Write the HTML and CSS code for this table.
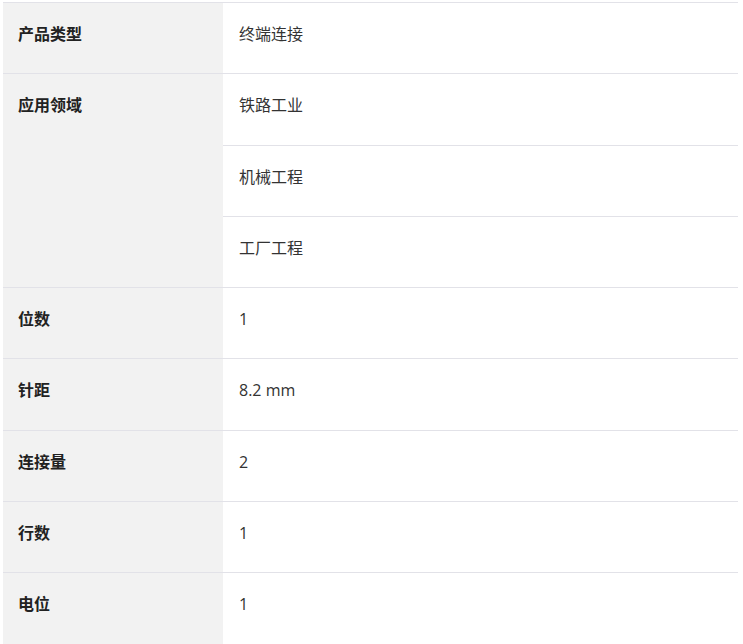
FILE: index.html
```html
<!DOCTYPE html>
<html lang="zh">
<head>
<meta charset="utf-8">
<link rel="stylesheet" href="styles.css">
</head>
<body>
<table class="spec">
  <tbody>
    <tr><th>产品类型</th><td>终端连接</td></tr>
    <tr><th rowspan="3">应用领域</th><td>铁路工业</td></tr>
    <tr><td>机械工程</td></tr>
    <tr><td>工厂工程</td></tr>
    <tr><th>位数</th><td>1</td></tr>
    <tr><th>针距</th><td>8.2 mm</td></tr>
    <tr><th>连接量</th><td>2</td></tr>
    <tr><th>行数</th><td>1</td></tr>
    <tr><th>电位</th><td>1</td></tr>
  </tbody>
</table>
</body>
</html>
```

FILE: styles.css
```css
html, body {
  margin: 0;
  background: #fff;
}
body {
  padding: 2px 5px 0 3px;
  font-family: "Open Sans", "Noto Sans CJK SC", sans-serif;
  font-size: 16px;
  color: #333;
}
.spec {
  width: 735px;
  border-collapse: collapse;
  table-layout: fixed;
}
.spec th, .spec td {
  border-top: 1px solid #e2e2e8;
  border-bottom: 1px solid #e2e2e8;
  height: 71.3px;
  box-sizing: border-box;
  padding: 0 15px;
  text-align: left;
  vertical-align: top;
  line-height: 22px;
  padding-top: 20px;
}
.spec th {
  width: 220px;
  background: #f2f2f2;
  font-weight: 700;
  color: #222;
}
.spec td {
  font-weight: 400;
  padding-left: 16px;
}
```
